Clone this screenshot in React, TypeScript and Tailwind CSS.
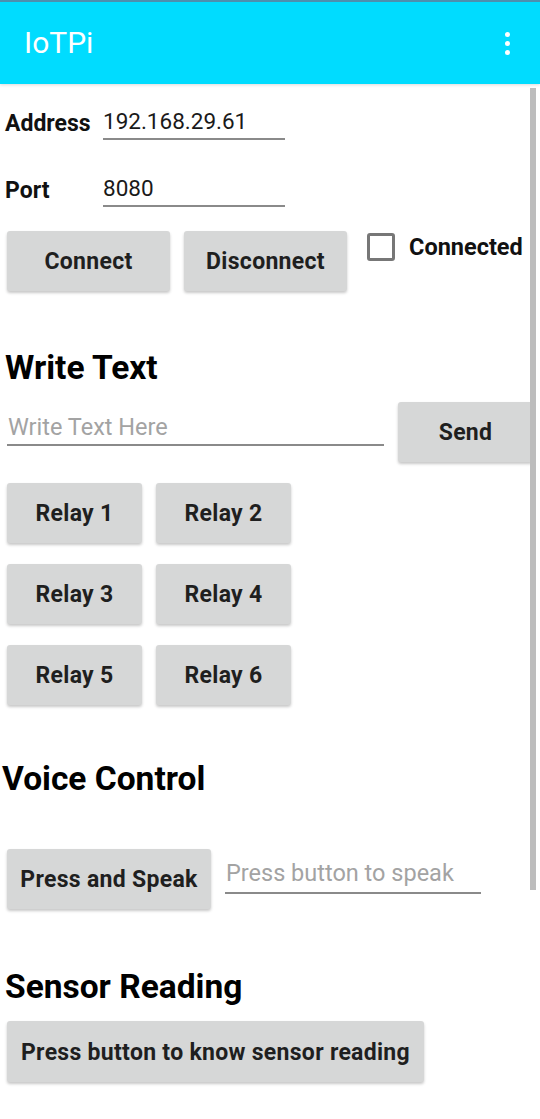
const btn =
  "flex items-center justify-center rounded-[3px] bg-[#d6d7d7] pt-[3px] text-[23px] font-bold tracking-[0.3px] text-[#1f1f1f] shadow-[0_2px_3px_rgba(0,0,0,0.22)]";

const Field = ({ label, value }: { label: string; value: string }) => (
  <div className="flex items-end">
    <span className="w-[103px] pl-[5px] pb-[3px] text-[23px] font-bold leading-[26px] text-[#111]">
      {label}
    </span>
    <div className="w-[182px] border-b-2 border-[#8a8a8a] pb-[4px] text-[22.5px] leading-[26px] text-[#1a1a1a]">
      {value}
    </div>
  </div>
);

const Heading = ({ text, className }: { text: string; className: string }) => (
  <h2 className={`text-[33.5px] font-bold leading-[38px] text-black ${className}`}>{text}</h2>
);

const App = () => {
  const relays = [1, 2, 3, 4, 5, 6];

  return (
    <div
      className="relative h-[1119px] w-[540px] overflow-hidden bg-white"
      style={{ fontFamily: "Roboto, 'Liberation Sans', sans-serif" }}
    >
      {/* app bar */}
      <header className="relative z-10 flex h-[84px] items-center justify-between border-t-2 border-[#4d8fae] bg-[#00dcff] pl-[24px] pr-[30px] shadow-[0_1px_3px_rgba(0,0,0,0.15)]">
        <span className="text-[30px] leading-none text-white">IoTPi</span>
        <div className="flex flex-col gap-[4px]">
          <span className="h-[5px] w-[5px] rounded-full bg-white" />
          <span className="h-[5px] w-[5px] rounded-full bg-white" />
          <span className="h-[5px] w-[5px] rounded-full bg-white" />
        </div>
      </header>

      <main className="flex flex-col">
        <div className="mt-[24px]">
          <Field label="Address" value="192.168.29.61" />
        </div>
        <div className="mt-[35px]">
          <Field label="Port" value="8080" />
        </div>

        <div className="mt-[24px] flex items-start pl-[7px]">
          <button className={`${btn} h-[60px] w-[163px]`}>Connect</button>
          <button className={`${btn} ml-[14px] h-[60px] w-[163px]`}>Disconnect</button>
          <label className="ml-[20px] mt-[2px] flex items-center">
            <span className="h-[28px] w-[28px] rounded-[3px] border-[3px] border-[#777]" />
            <span className="ml-[14px] text-[23.5px] font-bold leading-[28px] text-[#111]">
              Connected
            </span>
          </label>
        </div>

        <Heading text="Write Text" className="mt-[58px] pl-[5px]" />

        <div className="mt-[15px] flex items-start pl-[7px]">
          <div className="mt-[11px] w-[377px] border-b-2 border-[#8a8a8a] pb-[3px] pl-[1px] text-[23.5px] leading-[28px] text-[#a3a3a3]">
            Write Text Here
          </div>
          <button className={`${btn} ml-[14px] h-[60px] w-[135px]`}>Send</button>
        </div>

        <div className="mt-[21px] grid grid-cols-[135px_135px] gap-x-[14px] gap-y-[21px] pl-[7px]">
          {relays.map((n) => (
            <button key={n} className={`${btn} h-[60px] w-[135px]`}>
              Relay {n}
            </button>
          ))}
        </div>

        <Heading text="Voice Control" className="mt-[55px] pl-[2px]" />

        <div className="mt-[51px] flex items-start pl-[7px]">
          <button className={`${btn} h-[60px] w-[204px]`}>Press and Speak</button>
          <div className="ml-[14px] mt-[10px] w-[256px] border-b-2 border-[#8a8a8a] pb-[5px] pl-[1px] text-[23.5px] leading-[28px] text-[#a3a3a3]">
            Press button to speak
          </div>
        </div>

        <Heading text="Sensor Reading" className="mt-[59px] pl-[5px]" />

        <div className="mt-[15px] pl-[7px]">
          <button className={`${btn} h-[61px] w-[417px]`}>
            Press button to know sensor reading
          </button>
        </div>
      </main>

      {/* scrollbar */}
      <div className="absolute right-[4px] top-[88px] h-[802px] w-[6px] bg-[#bdbdbd]" />
    </div>
  );
};

export default App;
